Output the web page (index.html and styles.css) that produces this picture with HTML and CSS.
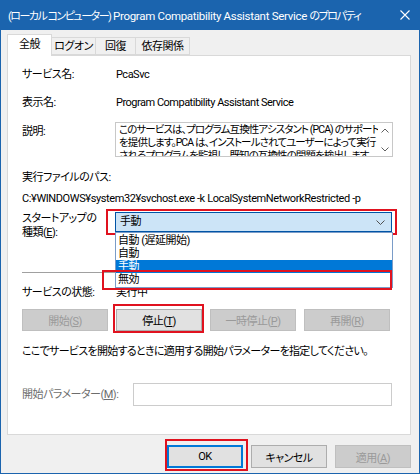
FILE: index.html
```html
<!DOCTYPE html>
<html lang="ja">
<head>
  <meta charset="UTF-8" />
  <meta name="viewport" content="width=device-width, initial-scale=1.0" />
  <title>Program Compatibility Assistant Service のプロパティ</title>
  <link rel="stylesheet" href="styles.css">
</head>
<body>
  <div class="window">
    <div class="titlebar">
      <span class="title"><span class="jp">(ローカル コンピューター)</span> Program Compatibility Assistant Service <span class="jp">のプロパティ</span></span>
      <span class="close">
        <svg width="10" height="10" viewBox="0 0 10 10"><path d="M0.5 0.5L9.5 9.5M9.5 0.5L0.5 9.5" stroke="#fff" stroke-width="1.1" fill="none"/></svg>
      </span>
    </div>

    <div class="client">
      <div class="tabs">
        <div class="tab active">全般</div>
        <div class="tab t-logon">ログオン</div>
        <div class="tab t-recovery">回復</div>
        <div class="tab t-deps">依存関係</div>
      </div>

      <div class="panel">
        <div class="row r-name">
          <span class="label">サービス名:</span>
          <span>PcaSvc</span>
        </div>
        <div class="row r-display">
          <span class="label">表示名:</span>
          <span>Program Compatibility Assistant Service</span>
        </div>
        <div class="row r-desc">
          <span class="label">説明:</span>
          <div class="desc">
            <div class="desc-text">このサービスは、プログラム互換性アシスタント (PCA) のサポート<br>を提供します。PCA は、インストールされてユーザーによって実行<br>されるプログラムを監視し、既知の互換性の問題を検出します。</div>
            <div class="scroll">
              <svg width="8" height="5" viewBox="0 0 8 5"><path d="M0.5 4.5L4 1L7.5 4.5" stroke="#606060" fill="none"/></svg>
              <svg width="8" height="5" viewBox="0 0 8 5"><path d="M0.5 0.5L4 4L7.5 0.5" stroke="#606060" fill="none"/></svg>
            </div>
          </div>
        </div>

        <div class="path-label">実行ファイルのパス:</div>
        <div class="path">C:¥WINDOWS¥system32¥svchost.exe -k LocalSystemNetworkRestricted -p</div>

        <div class="row r-startup">
          <span class="label two">スタートアップの<br>種類(<u>E</u>):</span>
          <div class="combo">
            <span>手動</span>
            <svg class="chevron" width="9" height="5" viewBox="0 0 9 5"><path d="M0.5 0.5L4.5 4.5L8.5 0.5" stroke="#505050" fill="none"/></svg>
            <div class="mark mark-combo"></div>
            <ul class="list">
              <li>自動 (遅延開始)</li>
              <li>自動</li>
              <li class="sel">手動</li>
              <li class="last">無効<div class="mark mark-item"></div></li>
            </ul>
          </div>
        </div>

        <div class="sep"></div>

        <div class="row r-status">
          <span class="label">サービスの状態:</span>
          <span>実行中</span>
        </div>

        <div class="buttons">
          <button class="btn" disabled>開始(<u>S</u>)</button>
          <button class="btn">停止(<u>T</u>)<span class="mark mark-stop"></span></button>
          <button class="btn" disabled>一時停止(<u>P</u>)</button>
          <button class="btn" disabled>再開(<u>R</u>)</button>
        </div>

        <p class="hint">ここでサービスを開始するときに適用する開始パラメーターを指定してください。</p>

        <div class="row r-param">
          <span class="label muted">開始パラメーター(<u>M</u>):</span>
          <div class="input"></div>
        </div>
      </div>

      <div class="footer">
        <button class="btn default">OK<span class="mark mark-ok"></span></button>
        <button class="btn">キャンセル</button>
        <button class="btn" disabled>適用(<u>A</u>)</button>
      </div>
    </div>
  </div>
</body>
</html>
```

FILE: styles.css
```css
body {
  margin: 0;
  font-family: Roboto, "Noto Sans CJK JP", sans-serif;
  font-size: 11px;
  letter-spacing: -0.5px;
  font-feature-settings: "palt";
  color: #000;
}
u {
  text-decoration: underline;
  text-underline-offset: 1px;
}
.window {
  width: 420px;
  height: 474px;
  box-sizing: border-box;
  border: 1px solid #1b64ae;
  border-top: none;
  background: #f0f0f0;
  display: flex;
  flex-direction: column;
}
.titlebar {
  height: 30px;
  flex-shrink: 0;
  background: #1b64ae;
  color: #fff;
  display: flex;
  align-items: center;
  justify-content: space-between;
  padding-left: 7px;
  white-space: nowrap;
}
.title {
  font-size: 11.5px;
  letter-spacing: -0.3px;
}
.title .jp {
  font-size: 11px;
  letter-spacing: -1.5px;
}
.close {
  width: 28px;
  height: 30px;
  display: flex;
  align-items: center;
  justify-content: center;
}
.client {
  padding: 4px 8px 0 6px;
  display: flex;
  flex-direction: column;
}
.tabs {
  display: flex;
  align-items: flex-end;
  height: 21px;
  position: relative;
  z-index: 1;
}
.tab {
  height: 18px;
  line-height: 17px;
  box-sizing: border-box;
  border: 1px solid #d9d9d9;
  border-left: none;
  text-align: center;
  background: #f0f0f0;
  white-space: nowrap;
}
.tab.active {
  width: 45px;
  height: 22px;
  line-height: 20px;
  margin-bottom: -1px;
  background: #fff;
  border-left: 1px solid #d9d9d9;
  border-bottom: none;
}
.t-logon { width: 44px; }
.t-recovery { width: 40px; }
.t-deps { width: 54px; }
.panel {
  height: 380px;
  box-sizing: border-box;
  border: 1px solid #d9d9d9;
  background: #fff;
  padding: 11px 17px 0 14px;
  display: flex;
  flex-direction: column;
}
.row {
  display: flex;
  line-height: 16px;
  white-space: nowrap;
}
.label {
  width: 94px;
  flex-shrink: 0;
}
.r-display { margin-top: 12px; }
.r-desc { margin-top: 11px; }
.r-desc .label { padding-top: 2px; }
.desc {
  margin-left: -1px;
  width: 278px;
  height: 35px;
  box-sizing: border-box;
  border: 1px solid #c8c8c8;
  display: flex;
  overflow: hidden;
}
.desc-text {
  flex: 1;
  padding: 0 0 0 3px;
  font-size: 10.5px;
  letter-spacing: -0.9px;
  line-height: 13px;
  white-space: nowrap;
  overflow: hidden;
}
.scroll {
  width: 14px;
  display: flex;
  flex-direction: column;
  justify-content: space-between;
  align-items: center;
  padding: 5px 0 4px;
}
.path-label {
  margin-top: 13px;
  line-height: 16px;
}
.path {
  margin-top: 5px;
  line-height: 16px;
  white-space: nowrap;
  letter-spacing: -0.4px;
}
.r-startup {
  margin-top: 5px;
}
.label.two {
  line-height: 14px;
}
.combo {
  position: relative;
  margin-left: -1px;
  width: 277px;
  height: 20px;
  box-sizing: border-box;
  border: 1px solid #0054a6;
  background: #cce4f7;
  display: flex;
  align-items: center;
  justify-content: space-between;
  padding: 0 6px 0 4px;
  z-index: 2;
}
.list {
  position: absolute;
  left: -1px;
  top: 19px;
  width: 276px;
  margin: 0;
  padding: 1px 0;
  list-style: none;
  background: #fff;
  border: 1px solid #7a9cc8;
}
.list li {
  position: relative;
  height: 13px;
  line-height: 13px;
  padding-left: 2px;
}
.list li.sel {
  background: #0078d7;
  color: #fff;
}
.mark {
  position: absolute;
  border: 2px solid #e0121f;
  pointer-events: none;
}
.mark-combo {
  left: -10px;
  top: -4px;
  right: -6px;
  bottom: -4px;
}
.mark-item {
  left: -14px;
  top: -3px;
  right: 0;
  bottom: -4px;
}
.sep {
  margin-top: 32px;
  height: 1px;
  background: #a0a0a0;
  width: 371px;
}
.r-status { margin-top: 12px; }
.buttons {
  margin-top: 8px;
  display: flex;
  gap: 8px;
}
.btn {
  position: relative;
  width: 86px;
  height: 22px;
  padding: 0;
  font: inherit;
  letter-spacing: inherit;
  font-feature-settings: "palt";
  color: #000;
  background: #e1e1e1;
  border: 1px solid #adadad;
}
.btn:disabled {
  background: #cccccc;
  border-color: #bfbfbf;
  color: #9a9a9a;
}
.mark-stop {
  left: -4px;
  top: -6px;
  right: -3px;
  bottom: -3px;
}
.hint {
  margin: 13px 0 0;
  line-height: 16px;
  white-space: nowrap;
  letter-spacing: -0.7px;
}
.r-param {
  margin-top: 23px;
  align-items: center;
}
.r-param .label {
  width: 111px;
}
.label.muted {
  color: #6d6d6d;
}
.input {
  width: 259px;
  height: 23px;
  box-sizing: border-box;
  border: 1px solid #cccccc;
  background: #fff;
}
.footer {
  margin-top: 10px;
  display: flex;
  justify-content: flex-end;
  gap: 8px;
}
.footer .btn {
  width: 76px;
  height: 23px;
}
.btn.default {
  border: 1px solid #0078d7;
  box-shadow: inset 0 0 0 1px #0078d7;
}
.mark-ok {
  left: -3px;
  top: -7px;
  right: -6px;
  bottom: -4px;
}
```
